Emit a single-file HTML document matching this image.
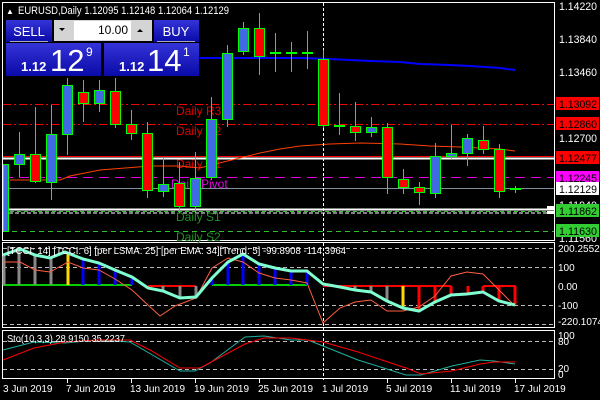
<!DOCTYPE html>
<html><head><meta charset="utf-8"><style>
html,body{margin:0;padding:0;background:#000;width:600px;height:400px;overflow:hidden}
svg{display:block;font-family:"Liberation Sans",sans-serif}
</style></head><body>
<svg width="600" height="400" viewBox="0 0 600 400" xmlns="http://www.w3.org/2000/svg">
<rect width="600" height="400" fill="#000"/>
<rect x="2.5" y="2.5" width="552" height="238" fill="none" stroke="#fff"/>
<rect x="2.5" y="242.5" width="552" height="85" fill="none" stroke="#fff"/>
<rect x="2.5" y="330.5" width="552" height="48" fill="none" stroke="#fff"/>

<line x1="3" y1="104.5" x2="554" y2="104.5" stroke="#f00" stroke-dasharray="8,3,2,3"/>
<line x1="3" y1="124.5" x2="554" y2="124.5" stroke="#f00" stroke-dasharray="8,3,2,3"/>
<line x1="3" y1="156.5" x2="554" y2="156.5" stroke="#f00"/>
<line x1="3" y1="158.5" x2="554" y2="158.5" stroke="#fff" stroke-width="2"/>
<line x1="3" y1="177.5" x2="554" y2="177.5" stroke="#e000e0" stroke-dasharray="10,6"/>
<line x1="3" y1="188.5" x2="554" y2="188.5" stroke="#8090a0"/>
<line x1="3" y1="209.5" x2="554" y2="209.5" stroke="#fff" stroke-width="2"/>
<line x1="3" y1="211.5" x2="554" y2="211.5" stroke="#30c030" stroke-dasharray="4,3"/>
<line x1="3" y1="213" x2="554" y2="213" stroke="#fff" stroke-dasharray="4,2"/>
<line x1="3" y1="231.5" x2="554" y2="231.5" stroke="#30c030" stroke-dasharray="5,4"/>

<g font-size="12">
<text x="176" y="115" fill="#e00000">Daily R3</text>
<text x="176" y="135" fill="#e00000">Daily R2</text>
<text x="176" y="168" fill="#e00000">Daily R1</text>
<text x="171" y="188" fill="#e000e0">Daily Pivot</text>
<text x="176" y="221" fill="#209020">Daily S1</text>
<text x="176" y="241" fill="#209020">Daily S2</text>
</g>

<polyline fill="none" stroke="#0000ff" stroke-width="2" points="200,58 300,58 330,59 350,60 370,61 400,62 420,64 450,65 470,66 500,68 515,70"/>
<polyline fill="none" stroke="#ff4000" stroke-width="1" points="10,180 60,180 70,176 100,170 125,168 150,166 180,166 200,168 215,164 240,158 260,153 280,149 300,146 330,144 360,143 400,144 430,146 460,147 500,149 515,151"/>

<line x1="323.5" y1="3" x2="323.5" y2="380" stroke="#fff" stroke-dasharray="3,2"/>

<g stroke="#00ff00" stroke-width="1">
<line x1="19.5" y1="132" x2="19.5" y2="177"/><line x1="35.5" y1="107" x2="35.5" y2="183"/>
<line x1="51.5" y1="105" x2="51.5" y2="200"/><line x1="67.5" y1="78" x2="67.5" y2="155"/>
<line x1="83.5" y1="80" x2="83.5" y2="122"/><line x1="99.5" y1="80" x2="99.5" y2="112"/>
<line x1="115.5" y1="78" x2="115.5" y2="128"/><line x1="131.5" y1="110" x2="131.5" y2="140"/>
<line x1="147.5" y1="122" x2="147.5" y2="198"/><line x1="163.5" y1="158" x2="163.5" y2="197"/>
<line x1="179.5" y1="162" x2="179.5" y2="213"/><line x1="195.5" y1="152" x2="195.5" y2="213"/>
<line x1="211.5" y1="97" x2="211.5" y2="180"/><line x1="227.5" y1="45" x2="227.5" y2="127"/>
<line x1="243.5" y1="22" x2="243.5" y2="55"/><line x1="259.5" y1="13" x2="259.5" y2="75"/>
<line x1="275.5" y1="33" x2="275.5" y2="72"/><line x1="291.5" y1="42" x2="291.5" y2="72"/>
<line x1="307.5" y1="31" x2="307.5" y2="69"/><line x1="323.5" y1="50" x2="323.5" y2="128"/>
<line x1="339.5" y1="93" x2="339.5" y2="135"/><line x1="355.5" y1="102" x2="355.5" y2="141"/>
<line x1="371.5" y1="117" x2="371.5" y2="137"/><line x1="387.5" y1="123" x2="387.5" y2="194"/>
<line x1="403.5" y1="169" x2="403.5" y2="194"/><line x1="419.5" y1="182" x2="419.5" y2="205"/>
<line x1="435.5" y1="143" x2="435.5" y2="198"/><line x1="451.5" y1="125" x2="451.5" y2="160"/>
<line x1="467.5" y1="134" x2="467.5" y2="166"/><line x1="483.5" y1="126" x2="483.5" y2="154"/>
<line x1="499.5" y1="144" x2="499.5" y2="198"/><line x1="515.5" y1="186" x2="515.5" y2="193"/>
</g>
<g stroke="#00ff00" stroke-width="1">
<rect x="3.5" y="164.5" width="5" height="67" fill="#4169e1"/>
<rect x="14.5" y="154.5" width="10" height="10" fill="#4169e1"/>
<rect x="30.5" y="154.5" width="10" height="27" fill="#f00"/>
<rect x="46.5" y="134.5" width="10" height="48" fill="#4169e1"/>
<rect x="62.5" y="85.5" width="10" height="49" fill="#4169e1"/>
<rect x="78.5" y="92.5" width="10" height="11" fill="#f00"/>
<rect x="94.5" y="90.5" width="10" height="13" fill="#4169e1"/>
<rect x="110.5" y="91.5" width="10" height="33" fill="#f00"/>
<rect x="126.5" y="124.5" width="10" height="9" fill="#f00"/>
<rect x="142.5" y="133.5" width="10" height="57" fill="#f00"/>
<rect x="158.5" y="184.5" width="10" height="7" fill="#4169e1"/>
<rect x="174.5" y="183.5" width="10" height="23" fill="#f00"/>
<rect x="190.5" y="178.5" width="10" height="28" fill="#4169e1"/>
<rect x="206.5" y="119.5" width="10" height="58" fill="#4169e1"/>
<rect x="222.5" y="53.5" width="10" height="66" fill="#4169e1"/>
<rect x="238.5" y="28.5" width="10" height="23" fill="#4169e1"/>
<rect x="254.5" y="28.5" width="10" height="28" fill="#f00"/>
<rect x="270.5" y="52.5" width="10" height="1" fill="#4169e1"/>
<rect x="286.5" y="52.5" width="10" height="1" fill="#00ff00"/>
<rect x="302.5" y="52.5" width="10" height="1" fill="#00ff00"/>
<rect x="318.5" y="59.5" width="10" height="66" fill="#f00"/>
<rect x="334.5" y="125.5" width="10" height="1" fill="#f00"/>
<rect x="350.5" y="126.5" width="10" height="6" fill="#f00"/>
<rect x="366.5" y="127.5" width="10" height="5" fill="#4169e1"/>
<rect x="382.5" y="127.5" width="10" height="50" fill="#f00"/>
<rect x="398.5" y="179.5" width="10" height="8" fill="#f00"/>
<rect x="414.5" y="187.5" width="10" height="5" fill="#f00"/>
<rect x="430.5" y="156.5" width="10" height="37" fill="#4169e1"/>
<rect x="446.5" y="153.5" width="10" height="3" fill="#4169e1"/>
<rect x="462.5" y="138.5" width="10" height="15" fill="#4169e1"/>
<rect x="478.5" y="140.5" width="10" height="9" fill="#f00"/>
<rect x="494.5" y="149.5" width="10" height="42" fill="#f00"/>
<rect x="510.5" y="188.5" width="10" height="1" fill="#4169e1"/>
</g>

<text x="6" y="14" font-size="8" fill="#fff">▲</text>
<text x="18" y="14" font-size="11" fill="#fff" textLength="211" lengthAdjust="spacingAndGlyphs">EURUSD,Daily  1.12095 1.12148 1.12064 1.12129</text>

<defs><linearGradient id="bg" x1="0" y1="0" x2="0" y2="1"><stop offset="0" stop-color="#3434d8"/><stop offset="1" stop-color="#0a0aa8"/></linearGradient></defs>
<rect x="6" y="20" width="46" height="22" fill="url(#bg)"/>
<text x="29" y="36" font-size="13" fill="#fff" text-anchor="middle">SELL</text>
<line x1="10" y1="41.5" x2="48" y2="41.5" stroke="#aab"/>
<rect x="154" y="20" width="45" height="22" fill="url(#bg)"/>
<text x="176" y="36" font-size="13" fill="#fff" text-anchor="middle">BUY</text>
<line x1="157" y1="41.5" x2="195" y2="41.5" stroke="#aab"/>
<rect x="54" y="20" width="98" height="21" fill="#d4d4d4"/>
<rect x="74" y="21" width="57" height="19" fill="#fff"/>
<text x="128" y="34" font-size="12" fill="#000" text-anchor="end">10.00</text>
<polygon points="59,28 65,28 62,31" fill="#000"/>
<polygon points="137,32 143,32 140,29" fill="#000"/>
<rect x="6" y="43" width="95" height="33" fill="url(#bg)"/>
<rect x="104" y="43" width="95" height="33" fill="url(#bg)"/>
<text x="21" y="71" font-size="13" font-weight="bold" fill="#fff">1.12</text>
<text x="50" y="71" font-size="31" fill="#fff">12</text>
<text x="86" y="56" font-size="12" fill="#fff">9</text>
<text x="119" y="71" font-size="13" font-weight="bold" fill="#fff">1.12</text>
<text x="147" y="71" font-size="31" fill="#fff">14</text>
<text x="183" y="56" font-size="12" fill="#fff">1</text>

<g font-size="11" fill="#fff">
<text x="559" y="10" textLength="38" lengthAdjust="spacingAndGlyphs">1.14220</text>
<text x="559" y="43" textLength="38" lengthAdjust="spacingAndGlyphs">1.13840</text>
<text x="559" y="76" textLength="38" lengthAdjust="spacingAndGlyphs">1.13460</text>
<text x="559" y="142" textLength="38" lengthAdjust="spacingAndGlyphs">1.12700</text>
<text x="559" y="209" textLength="38" lengthAdjust="spacingAndGlyphs">1.11940</text>
<text x="559" y="242" textLength="38" lengthAdjust="spacingAndGlyphs">1.11560</text>
</g>
<g font-size="11" fill="#000">
<rect x="556" y="97" width="43" height="13" fill="#f00"/><text x="559" y="108" textLength="38" lengthAdjust="spacingAndGlyphs">1.13092</text>
<rect x="556" y="117" width="43" height="13" fill="#f00"/><text x="559" y="128" textLength="38" lengthAdjust="spacingAndGlyphs">1.12860</text>
<rect x="556" y="151" width="43" height="13" fill="#f00"/><text x="559" y="162" textLength="38" lengthAdjust="spacingAndGlyphs">1.12477</text>
<rect x="556" y="171" width="43" height="13" fill="#f0f"/><text x="559" y="182" textLength="38" lengthAdjust="spacingAndGlyphs">1.12245</text>
<rect x="556" y="182" width="43" height="13" fill="#fff"/><text x="559" y="193" textLength="38" lengthAdjust="spacingAndGlyphs">1.12129</text>
<rect x="556" y="204" width="43" height="13" fill="#32cd32"/><text x="559" y="215" textLength="38" lengthAdjust="spacingAndGlyphs">1.11862</text>
<rect x="556" y="224" width="43" height="13" fill="#32cd32"/><text x="559" y="235" textLength="38" lengthAdjust="spacingAndGlyphs">1.11630</text>
</g>
<rect x="547" y="206" width="8" height="4" fill="#fff"/><rect x="547" y="211" width="8" height="3" fill="#fff"/>

<g stroke="#bbb" stroke-dasharray="4,3">
<line x1="3" y1="248.5" x2="554" y2="248.5"/><line x1="3" y1="267.5" x2="554" y2="267.5"/>
<line x1="3" y1="305.5" x2="554" y2="305.5"/><line x1="3" y1="324.5" x2="554" y2="324.5"/>
</g>
<g stroke-width="3">
<line x1="3" y1="285" x2="132" y2="285" stroke="#00d000" stroke-width="2"/>
<line x1="212" y1="285" x2="307" y2="285" stroke="#00d000" stroke-width="2"/>
<line x1="148" y1="286" x2="196" y2="286" stroke="#f00" stroke-width="2"/>
<line x1="323" y1="286" x2="451" y2="286" stroke="#f00" stroke-width="2"/>
<line x1="483" y1="286" x2="516" y2="286" stroke="#f00" stroke-width="2"/>
<line x1="4" y1="256" x2="4" y2="285" stroke="#888"/>
<line x1="19" y1="250" x2="19" y2="285" stroke="#888"/>
<line x1="35" y1="255" x2="35" y2="285" stroke="#888"/>
<line x1="51" y1="258" x2="51" y2="285" stroke="#888"/>
<line x1="68" y1="253" x2="68" y2="285" stroke="#ffd700"/>
<line x1="83" y1="259" x2="83" y2="285" stroke="#00f"/>
<line x1="99" y1="263" x2="99" y2="285" stroke="#00f"/>
<line x1="115" y1="270" x2="115" y2="285" stroke="#00f"/>
<line x1="132" y1="277" x2="132" y2="285" stroke="#00f"/>
<line x1="163" y1="286" x2="163" y2="291" stroke="#888"/>
<line x1="180" y1="286" x2="180" y2="298" stroke="#888"/>
<line x1="196" y1="286" x2="196" y2="297" stroke="#888"/>
<line x1="212" y1="278" x2="212" y2="285" stroke="#00f"/>
<line x1="228" y1="262" x2="228" y2="285" stroke="#00f"/>
<line x1="243" y1="254" x2="243" y2="285" stroke="#00f"/>
<line x1="259" y1="264" x2="259" y2="285" stroke="#00f"/>
<line x1="275" y1="268" x2="275" y2="285" stroke="#00f"/>
<line x1="291" y1="271" x2="291" y2="285" stroke="#00f"/>
<line x1="307" y1="271" x2="307" y2="285" stroke="#00f"/>
<line x1="355" y1="286" x2="355" y2="290" stroke="#888"/>
<line x1="371" y1="286" x2="371" y2="292" stroke="#888"/>
<line x1="387" y1="286" x2="387" y2="301" stroke="#888"/>
<line x1="403" y1="286" x2="403" y2="307" stroke="#ffd700"/>
<line x1="419" y1="286" x2="419" y2="311" stroke="#f00"/>
<line x1="435" y1="286" x2="435" y2="302" stroke="#f00"/>
<line x1="451" y1="286" x2="451" y2="295" stroke="#f00"/>
<line x1="468" y1="286" x2="468" y2="294" stroke="#f00"/>
<line x1="483" y1="286" x2="483" y2="292" stroke="#f00"/>
<line x1="499" y1="286" x2="499" y2="301" stroke="#f00"/>
<line x1="515" y1="286" x2="515" y2="305" stroke="#f00"/>
</g>
<polyline fill="none" stroke="#ff6040" stroke-width="1" points="3,262 20,262 35,270 50,272 68,262 83,268 99,270 115,279 132,290 148,305 160,316 175,306 196,298 212,268 228,258 243,262 259,273 275,278 291,280 307,283 323,323 340,308 355,302 371,300 387,311 403,311 419,307 435,296 451,276 467,272 483,274 499,290 515,306"/>
<polyline fill="none" stroke="#80ffd0" stroke-width="3" points="3,255 20,249 35,255 50,258 65,252 83,259 99,263 115,270 132,277 148,288 163,291 180,298 196,297 212,278 228,262 243,254 259,264 275,268 291,271 307,271 323,284 340,287 355,290 371,292 387,301 403,308 419,311 435,302 451,295 467,294 483,292 499,301 515,305"/>
<text x="7" y="254" font-size="10" fill="#fff" textLength="339" lengthAdjust="spacingAndGlyphs">[TCCI: 14] [TCCI: 6] [per LSMA: 25] [per EMA: 34][Trend: 5]  -99.8908 -114.3964</text>
<g font-size="10" fill="#fff">
<text x="558" y="252">200.2552</text>
<text x="558" y="271">100</text>
<text x="558" y="290">0.00</text>
<text x="558" y="309">-100</text>
<text x="558" y="325">-220.1074</text>
</g>

<g stroke="#bbb" stroke-dasharray="4,3">
<line x1="3" y1="341.5" x2="554" y2="341.5"/><line x1="3" y1="369.5" x2="554" y2="369.5"/>
</g>
<polyline fill="none" stroke="#20b0a0" stroke-width="1" points="3,350 34,342 65,343 96,340 130,342 180,371 195,371 210,363 245,337 264,336 291,340 308,340 323,346 358,360 406,375 421,375 452,366 480,360 494,361 515,364"/>
<polyline fill="none" stroke="#f00" stroke-width="1" points="3,360 34,348 65,342 96,340 130,340 150,350 180,368 200,368 215,360 245,344 264,338 291,338 323,342 358,352 406,368 421,374 452,371 480,364 494,362 515,362"/>
<text x="7" y="342" font-size="10" fill="#fff" textLength="118" lengthAdjust="spacingAndGlyphs">Sto(10,3,3) 28.9150 35.2237</text>
<g font-size="10" fill="#fff">
<text x="558" y="339">100</text><text x="558" y="345">80</text>
<text x="558" y="372">20</text><text x="558" y="378">0</text>
</g>

<g stroke="#fff">
<line x1="67.5" y1="379" x2="67.5" y2="383"/><line x1="131.5" y1="379" x2="131.5" y2="383"/>
<line x1="195.5" y1="379" x2="195.5" y2="383"/><line x1="259.5" y1="379" x2="259.5" y2="383"/>
<line x1="387.5" y1="379" x2="387.5" y2="383"/><line x1="451.5" y1="379" x2="451.5" y2="383"/>
<line x1="515.5" y1="379" x2="515.5" y2="383"/>
</g>
<g font-size="10" fill="#fff">
<text x="3" y="392">3 Jun 2019</text>
<text x="66" y="392">7 Jun 2019</text>
<text x="130" y="392">13 Jun 2019</text>
<text x="194" y="392">19 Jun 2019</text>
<text x="258" y="392">25 Jun 2019</text>
<text x="322" y="392">1 Jul 2019</text>
<text x="386" y="392">5 Jul 2019</text>
<text x="450" y="392">11 Jul 2019</text>
<text x="514" y="392">17 Jul 2019</text>
</g>
</svg>
</body></html>
